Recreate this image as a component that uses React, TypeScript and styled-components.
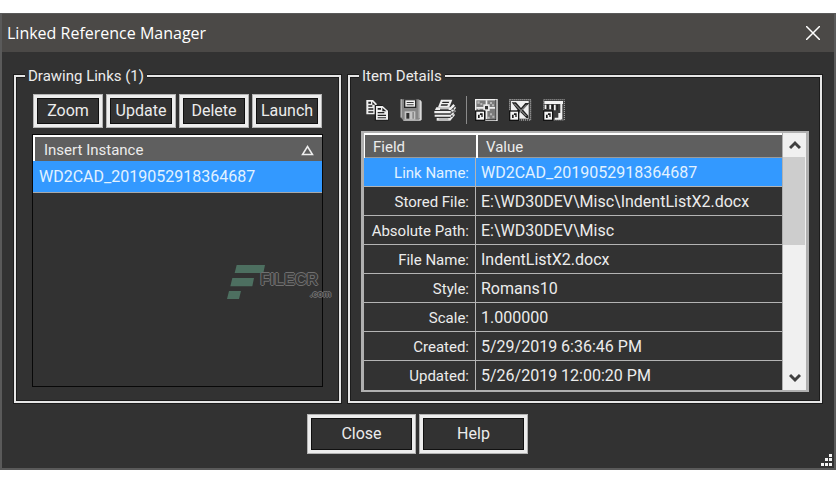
import React from "react";
import styled, { createGlobalStyle } from "styled-components";

const GlobalStyle = createGlobalStyle`
  *, *::before, *::after { box-sizing: border-box; }
  body {
    margin: 0;
    background: #ffffff;
    font-family: Roboto, "Liberation Sans", sans-serif;
    font-size: 16px;
    line-height: 20px;
    color: #ececec;
  }
  button { font: inherit; color: inherit; }
`;

const Page = styled.main`
  padding: 13px 0 15px;
`;

const Dialog = styled.section`
  position: relative;
  background: #323232;
  border: 2px solid #5a5a5a;
  border-top-width: 1px;
`;

const TitleBar = styled.header`
  display: flex;
  align-items: center;
  justify-content: space-between;
  height: 38px;
  padding: 0 5px;
  background: #4b4947;
`;

const Title = styled.h1`
  margin: 0;
  font-family: "Open Sans", "Noto Sans", sans-serif;
  font-size: 16px;
  font-weight: 400;
  color: #ffffff;
`;

const CloseIconButton = styled.button`
  display: grid;
  place-items: center;
  width: 32px;
  height: 32px;
  padding: 0;
  border: 0;
  background: transparent;
`;

const Panels = styled.div`
  display: grid;
  grid-template-columns: 327fr 474fr;
  gap: 7px;
  padding: 14px 12px 0;
`;

const Group = styled.fieldset<{ $sides: number; $bottom: number }>`
  display: flex;
  flex-direction: column;
  min-width: 0;
  margin: 0;
  padding: 8px ${(p) => p.$sides}px ${(p) => p.$bottom}px;
  border: 2px solid #e6e6e6;
  box-shadow: 0 0 0 1px #1c1c1c, inset 0 0 0 1px #1c1c1c;
`;

const Legend = styled.legend<{ $indent: number }>`
  margin-left: ${(p) => p.$indent}px;
  padding: 0 3px;
  background: #323232;
  font-size: 15px;
  line-height: 20px;
`;

const LinkActions = styled.div`
  display: grid;
  grid-template-columns: repeat(4, 1fr);
  gap: 3px;
  padding: 0 1px;
  margin-bottom: 6px;
`;

const PushButton = styled.button<{ $large?: boolean }>`
  min-width: ${(p) => (p.$large ? "109px" : "0")};
  height: ${(p) => (p.$large ? "40px" : "34px")};
  padding: 0;
  border: 4px solid #ededed;
  background: #323232;
  box-shadow: inset 0 0 0 1px #101010;
  outline: 1px solid #b4b4b4;
  outline-offset: -1px;
  white-space: nowrap;
`;

const LinkList = styled.div`
  position: relative;
  flex: 1;
  border: 1px solid #080808;
`;

const ListHeader = styled.button`
  display: flex;
  align-items: center;
  justify-content: space-between;
  width: 100%;
  height: 26px;
  padding: 2px 8px 0 9px;
  border: 0 solid #ffffff;
  border-width: 2px 0 0 2px;
  background: #5f5f5f;
  font-size: 15px;
  text-align: left;
`;

const Rows = styled.ul`
  margin: 0;
  padding: 0;
  list-style: none;
`;

const ListRow = styled.li`
  height: 32px;
  padding: 0 6px;
  border-bottom: 1px solid #a9a9a9;
  background: #3399ff;
  color: #e2f2ff;
  line-height: 31px;
`;

const Watermark = styled.div`
  position: absolute;
  right: -9px;
  bottom: 86px;
  display: flex;
  align-items: flex-start;
`;

const Brand = styled.span`
  display: flex;
  flex-direction: column;
  align-items: flex-end;
  width: 66px;
  padding-top: 7px;
  color: #383838;
  font-family: "Liberation Sans", sans-serif;
  font-weight: 700;
  text-shadow: 1px 0 #707070, -1px 0 #707070, 0 1px #707070, 0 -1px #707070;
`;

const BrandName = styled.span`
  padding-right: 13px;
  font-size: 16px;
  line-height: 18px;
`;

const BrandDomain = styled.span`
  font-size: 9px;
  line-height: 10px;
`;

const Toolbar = styled.div`
  display: flex;
  align-items: center;
  gap: 12px;
  height: 32px;
  margin-bottom: 5px;
  padding-left: 5px;
`;

const ToolButton = styled.button`
  display: block;
  width: 22px;
  height: 22px;
  padding: 0;
  border: 0;
  background: transparent;
  svg { display: block; overflow: visible; }
`;

const Divider = styled.span`
  width: 1px;
  height: 28px;
  margin: 0 -4px 0 -2px;
  background: #8a8a8a;
`;

const DetailsPane = styled.div`
  display: flex;
  border: 2px solid #b0b0b0;
  border-left-width: 3px;
  border-right-width: 3px;
`;

const DetailsTable = styled.table`
  flex: 1;
  min-width: 0;
  border-spacing: 0;
  table-layout: fixed;
`;

const HeadCell = styled.th<{ $first?: boolean }>`
  width: ${(p) => (p.$first ? "112px" : "auto")};
  height: 25px;
  padding: 1px 8px 0;
  border: 0 solid #ffffff;
  border-width: 2px 0 0 ${(p) => (p.$first ? "1px" : "2px")};
  box-shadow: inset 0 -1px #9b9b9b;
  background: #5f5f5f;
  font-size: 15px;
  font-weight: 400;
  text-align: left;
`;

const FieldCell = styled.th`
  height: 29px;
  padding: 1px 6px 0 0;
  border-right: 1px solid #b4b4b4;
  font-size: 15px;
  font-weight: 400;
  text-align: right;
  white-space: nowrap;
`;

const ValueCell = styled.td`
  padding: 1px 5px 0;
  white-space: nowrap;
`;

const DetailRow = styled.tr<{ $selected: boolean }>`
  background: ${(p) => (p.$selected ? "#3399ff" : "#323232")};
  color: ${(p) => (p.$selected ? "#e2f2ff" : "#ececec")};
  ${FieldCell}, ${ValueCell} { border-bottom: 1px solid #b4b4b4; }
  &:last-child ${FieldCell}, &:last-child ${ValueCell} { border-bottom: 0; }
`;

const ScrollBar = styled.div`
  display: flex;
  flex-direction: column;
  width: 24px;
  background: #f0f0f0;
  border-left: 1px solid #b0b0b0;
`;

const ScrollButton = styled.button`
  display: grid;
  place-items: center;
  height: 24px;
  padding: 0;
  border: 0;
  background: #f0f0f0;
`;

const ScrollTrack = styled.div`
  display: grid;
  grid-template-rows: 42% 1fr;
  flex: 1;
`;

const ScrollThumb = styled.div`
  margin-right: 1px;
  background: #cdcdcd;
`;

const Footer = styled.footer`
  display: flex;
  justify-content: center;
  gap: 3px;
  padding: 11px 1px 14px 0;
`;

const ResizeGrip = styled.div`
  position: absolute;
  right: 2px;
  bottom: 2px;
  svg { display: block; }
`;

const CopyIcon = () => (
  <svg width="22" height="22" viewBox="0 0 66 66" aria-hidden="true">
    <path d="M1 3h20l11 11v32H1z" fill="#eeeeee" />
    <path d="M7 8h8v6H7zM19 8v9h9M7 19h12v4H7zM7 28h15v4H7zM7 37h15v4H7z" fill="#222222" />
    <path d="M26 18h22l20 17v30H26z" fill="#1c1c1c" />
    <path d="M30 21h20l16 14v27H30z" fill="#eeeeee" />
    <path d="M35 27h10v5H35zM49 26v11h12zM35 39h20v4H35zM35 47h25v4H35zM35 55h25v3H35z" fill="#222222" />
  </svg>
);

const SaveIcon = () => (
  <svg width="22" height="22" viewBox="0 0 66 66" aria-hidden="true">
    <path d="M6 3h55l4 5v54l-4 3H10z" fill="#d9d9d9" />
    <path d="M2 1h55l3 4v54l-3 3H8l-6-7z" fill="#858585" />
    <path d="M2 1h3v54H2zM56 4h3v54h-3z" fill="#c7c7c7" />
    <path d="M12 1h37v26H12z" fill="#262626" />
    <path d="M16 4h29v19H16z" fill="#f1f1f1" />
    <path d="M20 9h21v3H20zM20 16h21v3H20z" fill="#3b3b3b" />
    <path d="M14 37h32v25H14z" fill="#c4c4c4" />
    <path d="M19 42h9v17h-9z" fill="#303030" />
    <path d="M37 39h5v20h-5z" fill="#8a8a8a" />
  </svg>
);

const PrintIcon = () => (
  <svg width="22" height="22" viewBox="0 0 66 66" aria-hidden="true">
    <path d="M21 2h34L46 25H12z" fill="#f0f0f0" />
    <path d="M26 8h20l-2 4H24zM22 16h20l-2 4H20z" fill="#272727" />
    <path d="M7 25h42l9-10 5 5-12 13H3zM1 36h49l14-13 2 4-14 16H1zM2 47h48l13-14 2 4-13 16H2z" fill="#eeeeee" />
    <path d="M8 57h40l12-13 3 4-14 17H8z" fill="#e8e8e8" />
    <path d="M18 29h26v3H18zM14 59h29v2H14z" fill="#353535" />
    <path d="M55 27h5v5h-5zM50 37h5v5h-5zM58 37h5v5h-5zM51 49h5v5h-5z" fill="#555555" />
  </svg>
);

const ShortcutBadge = () => (
  <g>
    <path d="M0 34h31v32H0z" fill="#121212" />
    <path d="M4 38h23v24H4z" fill="#f3f3f3" />
    <path d="M9 57V47h6v-4h8v11h-4v-6h-5v9z" fill="#1a1a1a" />
  </g>
);

const DrawingIcon = () => (
  <svg width="22" height="22" viewBox="0 0 66 66" aria-hidden="true">
    <path d="M0 0h68v66H0z" fill="#f2f2f2" />
    <path d="M4 4h57v57H4z" fill="#7b7b7b" />
    <path d="M7 7h7v7H7zM16 12h6v6h-6zM45 9h6v6h-6zM51 16h6v6h-6zM45 43h6v6h-6zM52 50h6v6h-6zM38 53h6v6h-6zM9 29h5v5H9z" fill="#b7b7b7" />
    <path d="M32 4h5v57h-5zM4 24h57v5H4z" fill="#eeeeee" />
    <path d="M25 16h19v20H25z" fill="#e9e9e9" />
    <path d="M30 21h9v10h-9z" fill="#303030" />
    <path d="M61 2h3v62H31v-3h30z" fill="#202020" />
    <ShortcutBadge />
  </svg>
);

const SpreadsheetIcon = () => (
  <svg width="22" height="22" viewBox="0 0 66 66" aria-hidden="true">
    <path d="M0 0h67v65H0z" fill="#444444" />
    <path d="M2 2h63v61H2z" fill="none" stroke="#c6c6c6" strokeWidth="3" strokeDasharray="3 3" />
    <path d="M6 6h53v53H6z" fill="#eeeeee" />
    <path d="M8 10h13l15 17 13-15h12L42 32l16 18v7h-6L34 39 28 46 10 50l16-17z" fill="#242424" />
    <path d="M14 14h4l36 37h-4zM51 17h4L28 46h-4z" fill="#8d8d8d" />
    <ShortcutBadge />
  </svg>
);

const DataIcon = () => (
  <svg width="22" height="22" viewBox="0 0 66 66" aria-hidden="true">
    <path d="M0 0h66v65H0z" fill="#3c3c3c" />
    <path d="M2 2h62v61H2z" fill="none" stroke="#adadad" strokeWidth="3" strokeDasharray="3 3" />
    <path d="M4 6h56v9H4zM5 17h5v13H5zM19 17h5v14h-5zM33 17h5v17h-5zM52 12h6v49h-6zM35 56h20v6H35zM46 42h8v16h-8z" fill="#f2f2f2" />
    <path d="M13 17h3v13h-3zM27 17h3v14h-3zM41 17h3v17h-3z" fill="#181818" />
    <ShortcutBadge />
  </svg>
);

const Chevron = ({ up }: { up?: boolean }) => (
  <svg width="12" height="10" viewBox="0 0 12 10" aria-hidden="true">
    <path d={up ? "M1 8l5-5 5 5" : "M1 2l5 5 5-5"} fill="none" stroke="#404040" strokeWidth="3" />
  </svg>
);

const linkActions = ["Zoom", "Update", "Delete", "Launch"];

const exportTools = [
  { label: "Copy", Icon: CopyIcon },
  { label: "Save", Icon: SaveIcon },
  { label: "Print", Icon: PrintIcon },
];

const openTools = [
  { label: "Link drawing", Icon: DrawingIcon },
  { label: "Link spreadsheet", Icon: SpreadsheetIcon },
  { label: "Link data", Icon: DataIcon },
];

const details = [
  ["Link Name:", "WD2CAD_2019052918364687"],
  ["Stored File:", "E:\\WD30DEV\\Misc\\IndentListX2.docx"],
  ["Absolute Path:", "E:\\WD30DEV\\Misc"],
  ["File Name:", "IndentListX2.docx"],
  ["Style:", "Romans10"],
  ["Scale:", "1.000000"],
  ["Created:", "5/29/2019 6:36:46 PM"],
  ["Updated:", "5/26/2019 12:00:20 PM"],
];

const gripDots = [
  [9, 0],
  [5, 4],
  [9, 4],
  [1, 9],
  [5, 9],
  [9, 9],
];

export default function App() {
  return (
    <>
      <GlobalStyle />
      <Page>
        <Dialog role="dialog" aria-labelledby="dialog-title">
          <TitleBar>
            <Title id="dialog-title">Linked Reference Manager</Title>
            <CloseIconButton aria-label="Close window">
              <svg width="14" height="14" viewBox="0 0 14 14" aria-hidden="true">
                <path d="M0 0l14 14M14 0L0 14" stroke="#ffffff" strokeWidth="1.5" />
              </svg>
            </CloseIconButton>
          </TitleBar>

          <Panels>
            <Group $sides={16} $bottom={14}>
              <Legend $indent={-7}>Drawing Links (1)</Legend>
              <LinkActions>
                {linkActions.map((label) => (
                  <PushButton key={label}>{label}</PushButton>
                ))}
              </LinkActions>
              <LinkList>
                <ListHeader>
                  Insert Instance
                  <svg width="13" height="11" viewBox="0 0 13 11" aria-hidden="true">
                    <path d="M6.500 1.500L11.500 9.500H1.500z" fill="none" stroke="#eeeeee" strokeWidth="1.500" />
                  </svg>
                </ListHeader>
                <Rows>
                  <ListRow>WD2CAD_2019052918364687</ListRow>
                </Rows>
                <Watermark>
                  <svg width="38" height="36" viewBox="0 0 114 108" aria-hidden="true">
                    <path d="M29 3h85l-5 24H23zM16 42h65l-5 25H10zM6 81h36l-6 24H0z" fill="#4d6f60" />
                  </svg>
                  <Brand>
                    <BrandName>FILECR</BrandName>
                    <BrandDomain>.com</BrandDomain>
                  </Brand>
                </Watermark>
              </LinkList>
            </Group>

            <Group $sides={11} $bottom={9}>
              <Legend $indent={-2}>Item Details</Legend>
              <Toolbar role="toolbar" aria-label="Item tools">
                {exportTools.map(({ label, Icon }) => (
                  <ToolButton key={label} aria-label={label}>
                    <Icon />
                  </ToolButton>
                ))}
                <Divider />
                {openTools.map(({ label, Icon }) => (
                  <ToolButton key={label} aria-label={label}>
                    <Icon />
                  </ToolButton>
                ))}
              </Toolbar>
              <DetailsPane>
                <DetailsTable>
                  <thead>
                    <tr>
                      <HeadCell $first scope="col">Field</HeadCell>
                      <HeadCell scope="col">Value</HeadCell>
                    </tr>
                  </thead>
                  <tbody>
                    {details.map(([field, value], index) => (
                      <DetailRow key={field} $selected={index === 0}>
                        <FieldCell scope="row">{field}</FieldCell>
                        <ValueCell>{value}</ValueCell>
                      </DetailRow>
                    ))}
                  </tbody>
                </DetailsTable>
                <ScrollBar>
                  <ScrollButton aria-label="Scroll up">
                    <Chevron up />
                  </ScrollButton>
                  <ScrollTrack>
                    <ScrollThumb />
                  </ScrollTrack>
                  <ScrollButton aria-label="Scroll down">
                    <Chevron />
                  </ScrollButton>
                </ScrollBar>
              </DetailsPane>
            </Group>
          </Panels>

          <Footer>
            <PushButton $large>Close</PushButton>
            <PushButton $large>Help</PushButton>
          </Footer>

          <ResizeGrip>
            <svg width="12" height="12" viewBox="0 0 12 12" aria-hidden="true">
              {gripDots.map(([x, y]) => (
                <rect key={`${x}-${y}`} x={x} y={y} width="3" height="3" fill="#f4f4f4" />
              ))}
            </svg>
          </ResizeGrip>
        </Dialog>
      </Page>
    </>
  );
}
